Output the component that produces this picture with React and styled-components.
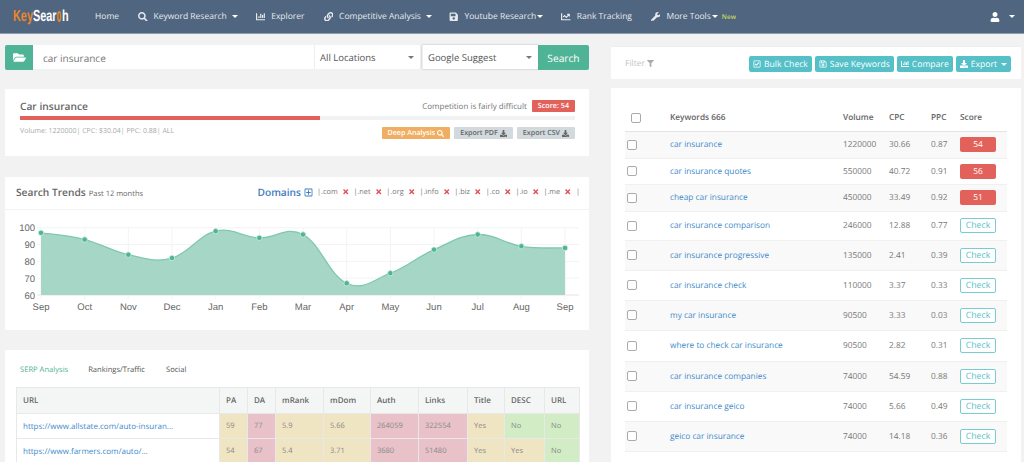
import React from 'react'
import styled, { createGlobalStyle } from 'styled-components'
import {
  FaSearch, FaChartBar, FaLink, FaSave, FaChartLine, FaWrench, FaUser, FaFolderOpen,
  FaFilter, FaRegCheckSquare, FaRegSave, FaDownload, FaRegPlusSquare, FaTimes,
} from 'react-icons/fa'

const GlobalStyle = createGlobalStyle`
  html, body { margin: 0; padding: 0; height: 100%; overflow: hidden; }
  body {
    background: #f2f2f2;
    font-family: "Open Sans", "Liberation Sans", sans-serif;
    color: #666;
    text-rendering: geometricPrecision;
  }
  * { box-sizing: border-box; }
`

const Page = styled.div`
  width: 1024px;
  height: 462px;
  overflow: hidden;
`

const NavBar = styled.div`
  height: 34px;
  background: #50657f;
  border-bottom: 1px solid #8d9aab;
  display: flex;
  align-items: center;
  padding: 0 9px 0 13px;
  color: #e6eaee;
  font-size: 8.5px;
`

const Logo = styled.div`
  width: 82px;
  font-family: "Liberation Sans", sans-serif;
  font-weight: 700;
  font-size: 16px;
  color: #fff;
  white-space: nowrap;
  transform: scaleX(.68);
  transform-origin: left center;
  display: flex;
  align-items: center;
  b { color: #e8872d; }
  i { display: inline-block; width: 11px; height: 11px; border: 2px solid #e8872d; border-radius: 50%; margin: 0 1px; }
`

const NavItem = styled.div`
  display: flex;
  align-items: center;
  gap: 6px;
  margin-right: ${p => p.$gap}px;
  white-space: nowrap;
  svg { font-size: 9.5px; }
`

const Caret = styled.span`
  display: inline-block;
  width: 0;
  height: 0;
  margin-left: ${p => p.$left ?? 1}px;
  border-left: 3px solid transparent;
  border-right: 3px solid transparent;
  border-top: 3px solid ${p => p.$color || '#fff'};
`

const NewTag = styled.span`
  color: #c3d85a;
  font-size: 6.5px;
  font-weight: 600;
`

const UserMenu = styled.div`
  margin-left: auto;
  display: flex;
  align-items: center;
  gap: 8px;
  color: #fff;
  svg { font-size: 10px; }
`

const Columns = styled.div`
  display: flex;
  align-items: flex-start;
  padding: 11px 3px 0 5px;
`

const LeftColumn = styled.div`
  width: 584px;
  margin-right: 22px;
`

const RightColumn = styled.div`
  width: 410px;
  padding-top: 1px;
`

const SearchBar = styled.div`
  display: flex;
  height: 25px;
  margin-bottom: 19px;
`

const FolderButton = styled.div`
  width: 28px;
  background: #4fb395;
  border-radius: 2px 0 0 2px;
  color: #fff;
  display: flex;
  align-items: center;
  justify-content: center;
  font-size: 13px;
`

const KeywordInput = styled.div`
  width: 281px;
  background: #fff;
  font-size: 10px;
  color: #777;
  padding: 2px 10px 0;
  display: flex;
  align-items: center;
  height: 24px;
`

const SelectBox = styled.div`
  width: ${p => p.$width}px;
  margin-right: ${p => p.$right || 0}px;
  height: 24px;
  background: #fff;
  border-left: 1px solid #eee;
  box-shadow: ${p => p.$raised ? '0 0 2px rgba(0,0,0,.25)' : 'none'};
  display: flex;
  align-items: center;
  justify-content: space-between;
  padding: 0 6px 0 5px;
  font-size: 9.5px;
  color: #555;
`

const SearchButton = styled.div`
  width: 51px;
  background: #4fb395;
  color: #fff;
  border-radius: 0 2px 2px 0;
  font-size: 10.2px;
  display: flex;
  align-items: center;
  justify-content: center;
`

const Card = styled.div`
  background: #fff;
  margin-bottom: ${p => p.$bottom || 0}px;
`

const SummaryCard = styled(Card)`
  height: 67px;
  padding: 9px 14px 0 15px;
`

const SummaryTop = styled.div`
  display: flex;
  justify-content: space-between;
  align-items: center;
  height: 16px;
`

const SummaryTitle = styled.div`
  font-size: 10.2px;
  font-weight: 600;
  color: #666;
`

const Competition = styled.div`
  display: flex;
  align-items: center;
  gap: 5px;
  font-size: 8px;
  color: #777;
`

const ScorePill = styled.span`
  background: #e2625b;
  color: #fff;
  font-size: 7.2px;
  font-weight: 600;
  padding: 1px 6px;
  height: 12px;
  line-height: 10px;
  border-radius: 1px;
`

const Progress = styled.div`
  height: 4px;
  margin-top: 2px;
  background: #f2f2f2;
`

const ProgressFill = styled.div`
  height: 100%;
  width: 300px;
  background: #e2625b;
`

const SummaryBottom = styled.div`
  display: flex;
  justify-content: space-between;
  align-items: flex-start;
  margin-top: 6px;
`

const Stats = styled.div`
  font-size: 7px;
  color: #aaa;
  padding-top: 1px;
`

const SmallButtons = styled.div`
  display: flex;
  gap: 4px;
  margin-top: 1px;
`

const SmallButton = styled.span`
  background: ${p => p.$bg};
  color: ${p => p.$color};
  font-size: 7.1px;
  font-weight: 600;
  height: 12px;
  padding: 0 6px;
  border-radius: 1px;
  display: flex;
  align-items: center;
  gap: 2px;
  svg { font-size: 7px; }
`

const TrendsCard = styled(Card)`
  height: 153px;
`

const TrendsHeader = styled.div`
  height: 33px;
  border-bottom: 1px solid #f2f2f2;
  display: flex;
  align-items: center;
  justify-content: space-between;
  padding: 0 9px 2px 11px;
`

const TrendsTitle = styled.div`
  font-size: 10.2px;
  font-weight: 600;
  color: #666;
  small { font-size: 7.5px; font-weight: 400; margin-left: 3px; }
`

const DomainList = styled.div`
  display: flex;
  align-items: center;
  font-size: 7.3px;
  color: #777;
  gap: 4px;
`

const DomainsLink = styled.span`
  display: flex;
  align-items: center;
  gap: 3px;
  color: #3f7cbf;
  font-size: 10.2px;
  font-weight: 600;
  svg { font-size: 9px; }
`

const Domain = styled.span`
  display: flex;
  align-items: center;
  gap: 4.3px;
  svg { color: #e0505a; font-size: 7.5px; }
`

const SerpCard = styled(Card)`
  padding: 15px 10px 0 11px;
  height: 120px;
`

const Tabs = styled.div`
  display: flex;
  height: 22px;
  font-size: 7.6px;
  font-weight: 500;
`

const Tab = styled.div`
  padding: 0 10px 0 ${p => p.$first ? 4 : 8}px;
  margin-right: ${p => p.$gap}px;
  color: ${p => p.$active ? '#4fb395' : '#555'};
`

const SerpTable = styled.table`
  width: 563px;
  border-collapse: collapse;
  table-layout: fixed;
  font-size: 7.5px;
  border-top: 1px solid #eee;
`

const SerpHead = styled.th`
  width: ${p => p.$width}px;
  height: 26px;
  background: #f4f6f6;
  border: 1px solid #e8e8e8;
  text-align: left;
  padding: 0 6px;
  color: #666;
  font-size: 8px;
  font-weight: 600;
`

const SerpCell = styled.td`
  height: 25px;
  background: ${p => p.$tone === 'r' ? '#e8c2c8' : p.$tone === 'y' ? '#f0e5c3' : p.$tone === 'g' ? '#d2edc5' : '#fff'};
  border: 1px solid #e8e8e8;
  padding: 0 6px;
  color: ${p => p.$tone ? '#888' : '#428bca'};
  font-size: ${p => p.$tone ? 7.5 : 8}px;
  white-space: nowrap;
`

const FilterCard = styled(Card)`
  height: 33px;
  margin-bottom: 9px;
  display: flex;
  align-items: center;
  justify-content: space-between;
  padding: 0 10px 0 14px;
  border-top: 1px solid #eee;
`

const FilterLabel = styled.span`
  color: #c4c4c4;
  font-size: 8.5px;
  display: flex;
  align-items: center;
  gap: 2px;
  svg { font-size: 7px; color: #aaa; }
`

const ToolButtons = styled.div`
  display: flex;
  gap: 3px;
  margin-top: 2px;
`

const ToolButton = styled.span`
  background: #55c0c8;
  color: #fff;
  height: 16px;
  border-radius: 2px;
  padding: 0 4px;
  font-size: 8.6px;
  display: flex;
  align-items: center;
  gap: 3px;
  svg { font-size: 8px; }
`

const KeywordsCard = styled(Card)`
  padding: 16px 14px 0 14px;
  height: 400px;
`

const KeywordTable = styled.table`
  width: 382px;
  border-collapse: collapse;
  table-layout: fixed;
  font-size: 8.3px;
`

const KwHead = styled.th`
  width: ${p => p.$width}px;
  height: 27px;
  text-align: left;
  font-weight: 600;
  color: #666;
  border-bottom: 1px solid #e4e4e4;
  padding: 1px 0 0;
`

const KwRow = styled.tr`
  height: ${p => p.$height}px;
  background: ${p => p.$striped ? '#f9f9f9' : '#fff'};
  td { border-bottom: 1px solid #f0f0f0; padding: 0; color: #777; }
`

const KwLink = styled.span`
  color: #428bca;
`

const CheckBox = styled.span`
  display: block;
  width: 10px;
  height: 10px;
  margin-left: ${p => p.$left}px;
  border: 1px solid #aaa;
  border-radius: 2px;
  background: #fff;
`

const ScoreBadge = styled.span`
  display: block;
  width: 36px;
  height: 15px;
  border-radius: 2px;
  background: #e2625b;
  color: #fff;
  text-align: center;
  line-height: 15px;
`

const CheckButton = styled.span`
  display: block;
  width: 36px;
  height: 15px;
  border-radius: 2px;
  border: 1px solid #78cdd3;
  color: #55c0c8;
  background: #fff;
  text-align: center;
  line-height: 13px;
  font-size: 8.7px;
`

const months = ['Sep', 'Oct', 'Nov', 'Dec', 'Jan', 'Feb', 'Mar', 'Apr', 'May', 'Jun', 'Jul', 'Aug', 'Sep']
const values = [97, 93, 84, 82, 98, 94, 96, 67, 73, 87, 96, 89, 88]

const chartX = i => 36 + i * 43.67
const chartY = v => 85 - (v - 60) * 1.68

// same kind of smoothing the chart lib does, tension .4
const curvePath = () => {
  const pts = values.map((v, i) => [chartX(i), chartY(v)])
  let d = `M${pts[0][0]} ${pts[0][1]}`
  for (let i = 0; i < pts.length - 1; i++) {
    const p0 = pts[i - 1] || pts[i]
    const p1 = pts[i]
    const p2 = pts[i + 1]
    const p3 = pts[i + 2] || p2
    const t = 0.2
    d += ` C${p1[0] + (p2[0] - p0[0]) * t} ${p1[1] + (p2[1] - p0[1]) * t} ${p2[0] - (p3[0] - p1[0]) * t} ${p2[1] - (p3[1] - p1[1]) * t} ${p2[0]} ${p2[1]}`
  }
  return d
}

const TrendChart = () => {
  const line = curvePath()
  return (
    <svg width="584" height="119" viewBox="0 0 584 119" style={{ display: 'block' }}>
      {[100, 90, 80, 70, 60].map(v => (
        <g key={v}>
          <line x1="32" x2="574" y1={chartY(v)} y2={chartY(v)} stroke={v === 60 ? '#e4e4e4' : '#f3f3f3'} />
          <text x="30" y={chartY(v) + 3.5} textAnchor="end" fontSize="9.5" fill="#666" fontFamily="Liberation Sans">{v}</text>
        </g>
      ))}
      {months.map((m, i) => (
        <g key={i}>
          <line x1={chartX(i)} x2={chartX(i)} y1="18" y2="89" stroke="#f3f3f3" />
          <text x={chartX(i)} y="100" textAnchor="middle" fontSize="9.5" fill="#666" fontFamily="Liberation Sans">{m}</text>
        </g>
      ))}
      <path d={`${line} L${chartX(12)} 85 L${chartX(0)} 85 Z`} fill="#a6d6c6" />
      <path d={line} fill="none" stroke="#7fc8b0" strokeWidth="1.3" />
      {values.map((v, i) => (
        <circle key={i} cx={chartX(i)} cy={chartY(v)} r="2.7" fill="#4fb395" stroke="#d6efe6" strokeWidth=".8" />
      ))}
    </svg>
  )
}

const serpWidths = [203, 28, 28, 48, 47, 48, 49, 37, 40, 35]
const serpHeads = ['URL', 'PA', 'DA', 'mRank', 'mDom', 'Auth', 'Links', 'Title', 'DESC', 'URL']
const serpRows = [
  ['https://www.allstate.com/auto-insuran...', ['59', 'y'], ['77', 'r'], ['5.9', 'y'], ['5.66', 'y'], ['264059', 'r'], ['322554', 'r'], ['Yes', 'y'], ['No', 'g'], ['No', 'g']],
  ['https://www.farmers.com/auto/...', ['54', 'y'], ['67', 'r'], ['5.4', 'y'], ['3.71', 'y'], ['3680', 'r'], ['51480', 'r'], ['Yes', 'y'], ['Yes', 'y'], ['No', 'g']],
]

const keywordRows = [
  ['car insurance', '1220000', '30.66', '0.87', '54', 27],
  ['car insurance quotes', '550000', '40.72', '0.91', '56', 26],
  ['cheap car insurance', '450000', '33.49', '0.92', '51', 27],
  ['car insurance comparison', '246000', '12.88', '0.77', null, 29],
  ['car insurance progressive', '135000', '2.41', '0.39', null, 30],
  ['car insurance check', '110000', '3.37', '0.33', null, 30],
  ['my car insurance', '90500', '3.33', '0.03', null, 30],
  ['where to check car insurance', '90500', '2.82', '0.31', null, 31],
  ['car insurance companies', '74000', '54.59', '0.88', null, 30],
  ['car insurance geico', '74000', '5.66', '0.49', null, 30],
  ['geico car insurance', '74000', '14.18', '0.36', null, 30],
]

const domains = ['.com', '.net', '.org', '.info', '.biz', '.co', '.io', '.me']

const App = () => {
  return (
    <Page>
      <GlobalStyle />
      <NavBar>
        <Logo><b>Key</b>Sear<i />h</Logo>
        <NavItem $gap={19}>Home</NavItem>
        <NavItem $gap={18}><FaSearch />Keyword Research<Caret $left={-1} /></NavItem>
        <NavItem $gap={19}><FaChartBar />Explorer</NavItem>
        <NavItem $gap={17}><FaLink />Competitive Analysis<Caret $left={-1} /></NavItem>
        <NavItem $gap={18}><FaSave />Youtube Research<Caret $left={-5} /></NavItem>
        <NavItem $gap={19}><FaChartLine />Rank Tracking</NavItem>
        <NavItem $gap={4}><FaWrench />More Tools<Caret $left={-5} /></NavItem>
        <NewTag>New</NewTag>
        <UserMenu><FaUser /><Caret /></UserMenu>
      </NavBar>
      <Columns>
        <LeftColumn>
          <SearchBar>
            <FolderButton><FaFolderOpen /></FolderButton>
            <KeywordInput>car insurance</KeywordInput>
            <SelectBox $width={106} $right={2}>All Locations<Caret $color="#777" /></SelectBox>
            <SelectBox $width={116} $raised>Google Suggest<Caret $color="#777" /></SelectBox>
            <SearchButton>Search</SearchButton>
          </SearchBar>
          <SummaryCard $bottom={21}>
            <SummaryTop>
              <SummaryTitle>Car insurance</SummaryTitle>
              <Competition>Competition is fairly difficult <ScorePill>Score: 54</ScorePill></Competition>
            </SummaryTop>
            <Progress><ProgressFill /></Progress>
            <SummaryBottom>
              <Stats>Volume: 1220000| CPC: $30.04| PPC: 0.88| ALL</Stats>
              <SmallButtons>
                <SmallButton $bg="#f0ae62" $color="#fff">Deep Analysis <FaSearch /></SmallButton>
                <SmallButton $bg="#d3dade" $color="#666">Export PDF <FaDownload /></SmallButton>
                <SmallButton $bg="#d3dade" $color="#666">Export CSV <FaDownload /></SmallButton>
              </SmallButtons>
            </SummaryBottom>
          </SummaryCard>
          <TrendsCard $bottom={20}>
            <TrendsHeader>
              <TrendsTitle>Search Trends<small>Past 12 months</small></TrendsTitle>
              <DomainList>
                <DomainsLink>Domains <FaRegPlusSquare /></DomainsLink>
                {domains.map(d => <Domain key={d}>|{d} <FaTimes /></Domain>)}
                <span>|</span>
              </DomainList>
            </TrendsHeader>
            <TrendChart />
          </TrendsCard>
          <SerpCard>
            <Tabs>
              <Tab $first $active $gap={2}>SERP Analysis</Tab>
              <Tab $gap={3}>Rankings/Traffic</Tab>
              <Tab $gap={0}>Social</Tab>
            </Tabs>
            <SerpTable>
              <thead>
                <tr>{serpHeads.map((h, i) => <SerpHead key={i} $width={serpWidths[i]}>{h}</SerpHead>)}</tr>
              </thead>
              <tbody>
                {serpRows.map(row => (
                  <tr key={row[0]}>
                    <SerpCell>{row[0]}</SerpCell>
                    {row.slice(1).map(([text, tone], i) => <SerpCell key={i} $tone={tone}>{text}</SerpCell>)}
                  </tr>
                ))}
              </tbody>
            </SerpTable>
          </SerpCard>
        </LeftColumn>
        <RightColumn>
          <FilterCard>
            <FilterLabel>Filter <FaFilter /></FilterLabel>
            <ToolButtons>
              <ToolButton><FaRegCheckSquare />Bulk Check</ToolButton>
              <ToolButton><FaRegSave />Save Keywords</ToolButton>
              <ToolButton><FaChartBar />Compare</ToolButton>
              <ToolButton><FaDownload />Export<Caret /></ToolButton>
            </ToolButtons>
          </FilterCard>
          <KeywordsCard>
            <KeywordTable>
              <thead>
                <tr>
                  <KwHead $width={45}><CheckBox $left={6} /></KwHead>
                  <KwHead $width={173}>Keywords 666</KwHead>
                  <KwHead $width={46}>Volume</KwHead>
                  <KwHead $width={42}>CPC</KwHead>
                  <KwHead $width={29}>PPC</KwHead>
                  <KwHead $width={47}>Score</KwHead>
                </tr>
              </thead>
              <tbody>
                {keywordRows.map(([kw, vol, cpc, ppc, score, h], i) => (
                  <KwRow key={kw} $height={h} $striped={i % 2 === 0}>
                    <td><CheckBox $left={2} /></td>
                    <td><KwLink>{kw}</KwLink></td>
                    <td>{vol}</td>
                    <td>{cpc}</td>
                    <td>{ppc}</td>
                    <td>{score ? <ScoreBadge>{score}</ScoreBadge> : <CheckButton>Check</CheckButton>}</td>
                  </KwRow>
                ))}
              </tbody>
            </KeywordTable>
          </KeywordsCard>
        </RightColumn>
      </Columns>
    </Page>
  )
}

export default App
